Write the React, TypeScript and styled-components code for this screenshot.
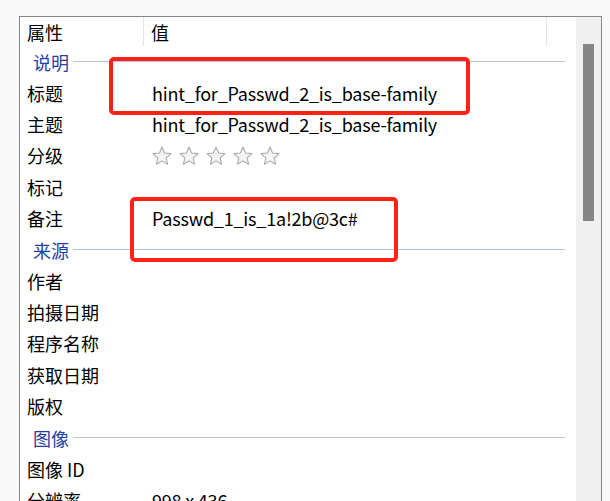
import React from 'react'
import styled, { createGlobalStyle } from 'styled-components'

const GlobalStyle = createGlobalStyle`
  html, body {
    margin: 0;
    padding: 0;
    background: #f9f9f9;
    overflow: hidden;
  }
  body {
    font-family: "Noto Sans CJK SC", "Noto Sans", sans-serif;
  }
`

const ROW_H = 31.333

const Page = styled.div`
  position: relative;
  width: 610px;
  height: 501px;
  padding: 16px 8px 0 19px;
  box-sizing: border-box;
  overflow: hidden;
`

const Panel = styled.div`
  display: flex;
  height: 520px;
  border: 1px solid #828790;
  border-bottom: none;
  background: #fff;
`

const List = styled.div`
  flex: 1;
  display: flex;
  flex-direction: column;
`

const Header = styled.div`
  display: grid;
  grid-template-columns: 124px 403px 1fr;
  height: 29.333px;
`

const HeaderCell = styled.div<{ $divider?: boolean }>`
  display: flex;
  align-items: center;
  padding-left: 7px;
  font-size: 18px;
  color: #000;
  border-right: ${({ $divider }) => ($divider ? '1px solid #e5e5e5' : 'none')};
`

const Row = styled.div`
  display: grid;
  grid-template-columns: 124px 1fr;
  height: ${ROW_H}px;
  align-items: center;
  font-size: 18px;
  color: #000;
  white-space: nowrap;
  padding-bottom: 1px;
  box-sizing: border-box;
`

const Label = styled.div`
  padding-left: 7px;
`

const Value = styled.div`
  padding-left: 8px;
  display: flex;
  align-items: center;
  gap: 7px;
  letter-spacing: -0.2px;
`

const Group = styled.div`
  display: flex;
  align-items: center;
  gap: 4px;
  height: ${ROW_H}px;
  padding: 0 11px 0 13px;
  font-size: 18px;
  color: #1f3fa6;
  white-space: nowrap;
  &::after {
    content: '';
    flex: 1;
    height: 1px;
    background: #b3c2e6;
  }
`

const Scrollbar = styled.div`
  width: 25px;
  background: #f0f0f0;
  padding: 27px 0 0 7px;
  box-sizing: border-box;
`

const Thumb = styled.div`
  width: 11px;
  height: 177px;
  background: #868686;
`

const Highlight = styled.div<{ $x: number; $y: number; $w: number; $h: number }>`
  position: absolute;
  left: ${({ $x }) => $x}px;
  top: ${({ $y }) => $y}px;
  width: ${({ $w }) => $w}px;
  height: ${({ $h }) => $h}px;
  border: 4px solid #fe2216;
  border-radius: 5px;
  box-sizing: border-box;
`

const Star = () => (
  <svg width="20" height="19" viewBox="0 0 24 23">
    <path
      d="M12 1.2l3.1 7.3 7.9.7-6 5.2 1.8 7.7L12 18l-6.8 4.1 1.8-7.7-6-5.2 7.9-.7z"
      fill="#f4f4f4"
      stroke="#aaaaaa"
      strokeWidth="1.3"
      strokeLinejoin="round"
    />
  </svg>
)

type Item = { kind: 'group'; label: string } | { kind: 'row'; label: string; value?: React.ReactNode }

const items: Item[] = [
  { kind: 'group', label: '说明' },
  { kind: 'row', label: '标题', value: 'hint_for_Passwd_2_is_base-family' },
  { kind: 'row', label: '主题', value: 'hint_for_Passwd_2_is_base-family' },
  {
    kind: 'row',
    label: '分级',
    value: (
      <>
        {[0, 1, 2, 3, 4].map((i) => (
          <Star key={i} />
        ))}
      </>
    ),
  },
  { kind: 'row', label: '标记' },
  { kind: 'row', label: '备注', value: 'Passwd_1_is_1a!2b@3c#' },
  { kind: 'group', label: '来源' },
  { kind: 'row', label: '作者' },
  { kind: 'row', label: '拍摄日期' },
  { kind: 'row', label: '程序名称' },
  { kind: 'row', label: '获取日期' },
  { kind: 'row', label: '版权' },
  { kind: 'group', label: '图像' },
  { kind: 'row', label: '图像 ID' },
  { kind: 'row', label: '分辨率', value: '998 x 436' },
]

const App = () => {
  return (
    <Page>
      <GlobalStyle />
      <Panel>
        <List>
          <Header>
            <HeaderCell $divider>属性</HeaderCell>
            <HeaderCell $divider>值</HeaderCell>
            <HeaderCell />
          </Header>
          {items.map((item, i) =>
            item.kind === 'group' ? (
              <Group key={i}>{item.label}</Group>
            ) : (
              <Row key={i}>
                <Label>{item.label}</Label>
                <Value>{item.value}</Value>
              </Row>
            )
          )}
        </List>
        <Scrollbar>
          <Thumb />
        </Scrollbar>
      </Panel>
      <Highlight $x={109} $y={57} $w={361} $h={58} />
      <Highlight $x={130} $y={197} $w={268} $h={65} />
    </Page>
  )
}

export default App
